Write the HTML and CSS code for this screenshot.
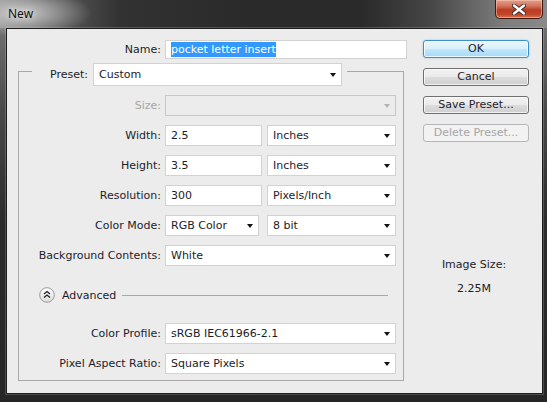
FILE: index.html
```html
<!DOCTYPE html>
<html>
<head>
<meta charset="utf-8">
<title>New</title>
<link rel="stylesheet" href="styles.css">
</head>
<body>
<div class="window">
  <div class="titlebar">
    <span class="title">New</span>
    <div class="close">
      <svg width="14" height="11" viewBox="0 0 14 11">
        <path d="M2 1.5 L12 9.5 M12 1.5 L2 9.5" stroke="#3a2a26" stroke-width="4.2" stroke-linecap="round"/>
        <path d="M2 1.5 L12 9.5 M12 1.5 L2 9.5" stroke="#ffffff" stroke-width="2.4" stroke-linecap="round"/>
      </svg>
    </div>
  </div>
  <div class="client">
    <div class="main">
      <div class="row name-row">
        <span class="lbl">Name:</span>
        <div class="field input name"><span class="sel">pocket letter insert</span></div>
      </div>
      <div class="group">
        <div class="preset-row">
          <span class="lbl">Preset:</span>
          <div class="field select preset"><span>Custom</span><i class="tri"></i></div>
        </div>
        <div class="grid rows1">
          <span class="lbl dis">Size:</span>
          <div class="field select disabled"><span></span><i class="tri"></i></div>

          <span class="lbl">Width:</span>
          <div class="pair">
            <div class="field input num">2.5</div>
            <div class="field select unit"><span>Inches</span><i class="tri"></i></div>
          </div>

          <span class="lbl">Height:</span>
          <div class="pair">
            <div class="field input num">3.5</div>
            <div class="field select unit"><span>Inches</span><i class="tri"></i></div>
          </div>

          <span class="lbl">Resolution:</span>
          <div class="pair">
            <div class="field input num">300</div>
            <div class="field select unit"><span>Pixels/Inch</span><i class="tri"></i></div>
          </div>

          <span class="lbl">Color Mode:</span>
          <div class="pair">
            <div class="field select mode"><span>RGB Color</span><i class="tri"></i></div>
            <div class="field select unit"><span>8 bit</span><i class="tri"></i></div>
          </div>

          <span class="lbl">Background Contents:</span>
          <div class="field select"><span>White</span><i class="tri"></i></div>
        </div>

        <div class="advanced">
          <svg class="adv-icon" width="16" height="16" viewBox="0 0 16 16">
            <defs>
              <linearGradient id="g" x1="0" y1="0" x2="0" y2="1">
                <stop offset="0" stop-color="#ffffff"/>
                <stop offset="1" stop-color="#dcdcdc"/>
              </linearGradient>
            </defs>
            <circle cx="8" cy="8" r="7.3" fill="url(#g)" stroke="#9a9a9a" stroke-width="1"/>
            <path d="M5 7 L8 4.5 L11 7 M5 10.5 L8 8 L11 10.5" fill="none" stroke="#222" stroke-width="1.3"/>
          </svg>
          <span class="adv-text">Advanced</span>
          <span class="adv-line"></span>
        </div>

        <div class="grid rows2">
          <span class="lbl">Color Profile:</span>
          <div class="field select"><span>sRGB IEC61966-2.1</span><i class="tri"></i></div>

          <span class="lbl">Pixel Aspect Ratio:</span>
          <div class="field select"><span>Square Pixels</span><i class="tri"></i></div>
        </div>
      </div>
    </div>

    <div class="side">
      <div class="btn default">OK</div>
      <div class="btn">Cancel</div>
      <div class="btn">Save Preset...</div>
      <div class="btn off">Delete Preset...</div>
      <div class="imgsize">
        <div class="is-label">Image Size:</div>
        <div class="is-value">2.25M</div>
      </div>
    </div>
  </div>
</div>
</body>
</html>
```
FILE: styles.css
```css
html, body {
  margin: 0;
  padding: 0;
}
body {
  width: 547px;
  height: 402px;
  overflow: hidden;
  background: #2a2a2a;
  font-family: "DejaVu Sans", Tahoma, sans-serif;
  font-size: 11px;
  color: #1c1c2a;
}
.window {
  box-sizing: border-box;
  width: 547px;
  height: 402px;
  padding: 0 4px 8px 6px;
  display: flex;
  flex-direction: column;
  background:
    radial-gradient(ellipse 70px 24px at 22px 13px, rgba(215,215,215,0.85), rgba(215,215,215,0) 100%),
    linear-gradient(90deg, #8c8c8c 0, #5e5e5e 9%, #323232 22%, #2a2a2a 45%, #2a2a2a 66%, #444 78%, #7c7c7c 92%, #8a8a8a 100%) top left / 100% 28px no-repeat,
    linear-gradient(180deg, #7c7c7c 0, #4a4a4a 110px, #2c2c2c 220px, #262626 100%);
}
.titlebar {
  height: 28px;
  flex: none;
  display: flex;
  align-items: flex-start;
  justify-content: space-between;
}
.title {
  font-family: "Noto Sans", "Open Sans", sans-serif;
  font-size: 12px;
  color: #111;
  margin: 5px 0 0 2px;
  text-shadow: 0 0 6px rgba(255,255,255,0.9);
}
.close {
  width: 48px;
  height: 19px;
  box-sizing: border-box;
  border: 1px solid #3e1b12;
  border-top: none;
  border-radius: 0 0 5px 5px;
  background: linear-gradient(180deg, #e3a08c 0, #d2705a 35%, #b93b22 55%, #c2462a 80%, #dc7250 100%);
  box-shadow: inset 0 0 0 1px rgba(255,220,200,0.45);
  display: flex;
  align-items: center;
  justify-content: center;
}
.client {
  flex: 1;
  display: flex;
  align-items: flex-start;
  background: #ececec;
  border: 1px solid #1c1c1c;
  box-shadow: 0 0 0 1px rgba(255,255,255,0.18);
  padding: 11px 0 0 11px;
}
.main {
  width: 389px;
  flex: none;
}
.lbl {
  text-align: right;
  white-space: nowrap;
  line-height: 13px;
}
.lbl.dis { color: #a6a6a6; }
.row {
  display: grid;
  grid-template-columns: 143px 242px;
  column-gap: 4px;
  align-items: center;
}
.field {
  box-sizing: border-box;
  height: 21px;
  background: #fff;
  border: 1px solid #d2d2d2;
  display: flex;
  align-items: center;
  padding: 0 5px 0 5px;
  white-space: nowrap;
}
.name {
  height: 19px;
}
.sel {
  background: #3399ff;
  color: #fff;
  line-height: 15px;
}
.select .tri {
  margin-left: auto;
  width: 0;
  height: 0;
  border-left: 3px solid transparent;
  border-right: 3px solid transparent;
  border-top: 4px solid #111;
  flex: none;
}
.select.disabled {
  background: #ececec;
  border-color: #c8c8c8;
}
.select.disabled .tri { border-top-color: #b4b4b4; }
.group {
  margin-top: 12px;
  width: 386px;
  box-sizing: border-box;
  border: 1px solid #a8a8a8;
  padding-bottom: 6px;
}
.preset-row {
  display: inline-flex;
  align-items: center;
  gap: 5px;
  margin: -9px 0 0 13px;
  padding: 0 5px 0 18px;
  background: #ececec;
  vertical-align: top;
}
.preset {
  width: 249px;
  height: 23px;
}
.grid {
  display: grid;
  grid-template-columns: 142px 231px;
  column-gap: 4px;
  row-gap: 9px;
  align-items: center;
}
.rows1 { margin-top: 9px; }
.pair {
  display: flex;
  justify-content: space-between;
}
.num { width: 97px; }
.unit { width: 129px; }
.mode { width: 94px; }
.advanced {
  display: flex;
  align-items: center;
  height: 16px;
  margin: 21px 15px 0 20px;
}
.adv-icon { flex: none; }
.adv-text { margin-left: 7px; line-height: 13px; }
.adv-line {
  flex: 1;
  height: 1px;
  background: #a8a8a8;
  margin-left: 6px;
}
.rows2 { margin-top: 20px; }
.side {
  width: 106px;
  margin-left: 16px;
  display: flex;
  flex-direction: column;
  gap: 10px;
}
.btn {
  box-sizing: border-box;
  height: 18px;
  border: 1px solid #707070;
  border-radius: 3px;
  background: linear-gradient(180deg, #f2f2f2 0, #ebebeb 48%, #dddddd 52%, #cfcfcf 100%);
  box-shadow: inset 0 0 0 1px rgba(255,255,255,0.7);
  text-align: center;
  line-height: 15px;
  color: #1c1c2a;
}
.btn.default {
  border-color: #3c8fc8;
  background: linear-gradient(180deg, #eaf6fd 0, #d9f0fc 48%, #bee6fd 52%, #a7d9f5 100%);
  box-shadow: inset 0 0 0 1px rgba(255,255,255,0.8), 0 0 2px rgba(60,160,220,0.5);
}
.btn.off {
  border-color: #b5b8ba;
  background: #f2f2f2;
  color: #a6a6a6;
  box-shadow: none;
}
.imgsize {
  margin-top: 106px;
  text-align: center;
  padding-right: 4px;
}
.is-label { line-height: 13px; }
.is-value { line-height: 13px; margin-top: 11px; }
```
